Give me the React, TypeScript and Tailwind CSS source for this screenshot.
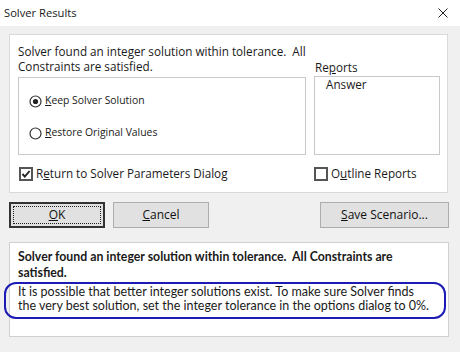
import React from "react";

const ui = { fontFamily: '"Open Sans", "Noto Sans", sans-serif' };
const body = { fontFamily: 'Lato, "Open Sans", sans-serif' };

function Radio({ checked }: { checked?: boolean }) {
  return (
    <svg width="13" height="13" viewBox="0 0 13 13" className="shrink-0">
      <circle cx="6.5" cy="6.5" r="5.5" fill="#fff" stroke="#333" strokeWidth="1.2" />
      {checked && <circle cx="6.5" cy="6.5" r="2.6" fill="#222" />}
    </svg>
  );
}

function Check({ checked }: { checked?: boolean }) {
  return (
    <span className="flex h-[14px] w-[14px] shrink-0 items-center justify-center border-2 border-[#555] bg-white">
      {checked && (
        <svg width="10" height="10" viewBox="0 0 10 10">
          <path d="M1.5 5 L3.8 7.6 L8.6 2" fill="none" stroke="#222" strokeWidth="1.9" />
        </svg>
      )}
    </span>
  );
}

function Btn({ children, w, focus }: { children: React.ReactNode; w: string; focus?: boolean }) {
  return (
    <div
      className={`flex h-[26px] items-center justify-center bg-[#e1e1e1] text-[12px] text-[#111] ${w} ${
        focus ? "border-2 border-[#333] p-[2px]" : "border border-[#adadad]"
      }`}
    >
      <span
        className={`flex h-full w-full items-center justify-center ${
          focus ? "border border-dotted border-[#222]" : ""
        }`}
      >
        {children}
      </span>
    </div>
  );
}

export default function App() {
  return (
    <div className="h-[352px] w-[460px] overflow-hidden bg-[#f0f0f0] text-[#1a1a1a]" style={ui}>
      <div className="flex h-[26px] items-center justify-between bg-white pl-[4px] pr-[12px]">
        <span className="text-[11.2px]">Solver Results</span>
        <svg width="10" height="10" viewBox="0 0 10 10">
          <path d="M0.5 0.5 L9.5 9.5 M9.5 0.5 L0.5 9.5" stroke="#222" strokeWidth="1" />
        </svg>
      </div>

      <div className="ml-[9px] mt-[8px] h-[159px] w-[439px] border border-[#d9d9d9] bg-white pl-[8px] pr-[7px] pt-[9px] text-[11.7px]">
        <div className="flex gap-[8px]">
          <div className="flex w-[288px] flex-col">
            <p className="h-[33px] whitespace-nowrap leading-[15px]">
              Solver found an integer solution within tolerance.&nbsp; All
              <br />
              Constraints are satisfied.
            </p>
            <div className="flex h-[78px] flex-col gap-[16px] border border-[#c9c9c9] pl-[10px] pt-[15px] text-[10.4px]">
              <div className="flex h-[16px] items-center gap-[3px]">
                <Radio checked />
                <span>
                  <u>K</u>eep Solver Solution
                </span>
              </div>
              <div className="flex h-[16px] items-center gap-[3px]">
                <Radio />
                <span>
                  <u>R</u>estore Original Values
                </span>
              </div>
            </div>
          </div>
          <div className="flex w-[126px] flex-col">
            <p className="h-[32px] pl-[1px] pt-[16px] leading-[15px]">
              Re<u>p</u>orts
            </p>
            <div className="h-[79px] border border-[#c9c9c9] pl-[11px] leading-[15px]">Answer</div>
          </div>
        </div>
        <div className="mt-[10px] flex items-center">
          <div className="flex w-[296px] items-center gap-[3px] pl-[1px]">
            <Check checked />
            <span>
              R<u>e</u>turn to Solver Parameters Dialog
            </span>
          </div>
          <div className="flex items-center gap-[3px]">
            <Check />
            <span>
              O<u>u</u>tline Reports
            </span>
          </div>
        </div>
      </div>

      <div className="mt-[9px] flex pl-[9px]">
        <Btn w="w-[96px]" focus>
          <u>O</u>K
        </Btn>
        <div className="ml-[8px]">
          <Btn w="w-[96px]">
            <u>C</u>ancel
          </Btn>
        </div>
        <div className="ml-[111px]">
          <Btn w="w-[129px]">
            <u>S</u>ave Scenario...
          </Btn>
        </div>
      </div>

      <div className="ml-[9px] mt-[14px] h-[95px] w-[440px] border border-[#d0d0d0] bg-white pt-[6px]" style={body}>
        <p className="whitespace-nowrap pl-[8px] text-[12.3px] font-bold leading-[16px]">
          Solver found an integer solution within tolerance.&nbsp; All Constraints are
          <br />
          satisfied.
        </p>
        <div className="-ml-[6px] mt-[1px] h-[37px] w-[442px] whitespace-nowrap rounded-[12px] border-2 border-[#1c1cb4] pl-[12px] pt-[1px] text-[12.5px] leading-[13.5px]">
          It is possible that better integer solutions exist. To make sure Solver finds
          <br />
          the very best solution, set the integer tolerance in the options dialog to 0%.
        </div>
      </div>
    </div>
  );
}
